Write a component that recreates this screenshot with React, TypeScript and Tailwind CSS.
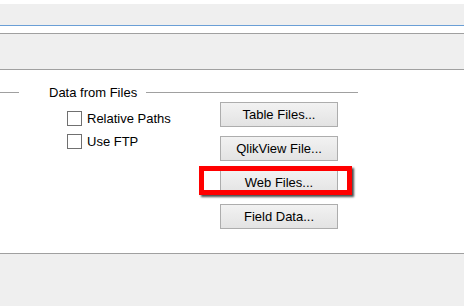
import React from 'react';

// Little Windows-style push button
const DialogButton = ({ label }: { label: string }) => (
    <div className="h-[25px] w-[118px] flex items-center justify-center border border-[#adadad] bg-gradient-to-b from-[#f2f2f2] to-[#e3e3e3] text-[13px] leading-[15px] text-black">
        {label}
    </div>
);

const CheckRow = ({ label }: { label: string }) => (
    <div className="flex items-center gap-[5px] h-[15px]">
        <div className="w-[15px] h-[15px] border border-[#707070] bg-white" />
        <span className="text-[13px] leading-[15px] text-black">{label}</span>
    </div>
);

const App = () => {
    return (
        <div className="w-[464px] h-[306px] flex flex-col bg-white overflow-hidden" style={{ fontFamily: '"Liberation Sans", Arial, sans-serif' }}>
            {/* top strip */}
            <div className="h-[4px] bg-white" />
            <div className="h-[21px] bg-[#efefef]" />
            <div className="h-px bg-[#6a9fd6]" />
            <div className="h-[7px] bg-white" />
            <div className="h-px bg-[#a0a0a0]" />
            <div className="h-[35px] bg-[#efefef]" />
            <div className="h-px bg-[#a0a0a0]" />

            {/* content */}
            <div className="relative h-[183px] bg-white pt-[15px]">
                <div className="flex items-center h-[15px]">
                    <div className="w-[19px] h-px bg-[#a0a0a0]" />
                    <span className="ml-[30px] text-[13px] leading-[15px] text-black">Data from Files</span>
                    <div className="ml-[9px] w-[212px] h-px bg-[#a0a0a0]" />
                </div>

                <div className="flex items-start mt-[2px]">
                    <div className="ml-[67px] w-[153px] mt-[9px] flex flex-col gap-[8px]">
                        <CheckRow label="Relative Paths" />
                        <CheckRow label="Use FTP" />
                    </div>
                    <div className="flex flex-col gap-[9px]">
                        <DialogButton label="Table Files..." />
                        <DialogButton label="QlikView File..." />
                        <DialogButton label="Web Files..." />
                        <DialogButton label="Field Data..." />
                    </div>
                </div>

                {/* highlight box */}
                <div className="absolute left-[199px] top-[96px] w-[153px] h-[29px] border-[5px] border-[#ff0000] shadow-[2px_2px_2px_rgba(0,0,0,0.7)]" />
            </div>

            <div className="h-px bg-[#a0a0a0]" />
            <div className="flex-1 bg-[#efefef]" />
        </div>
    );
};

export default App;
